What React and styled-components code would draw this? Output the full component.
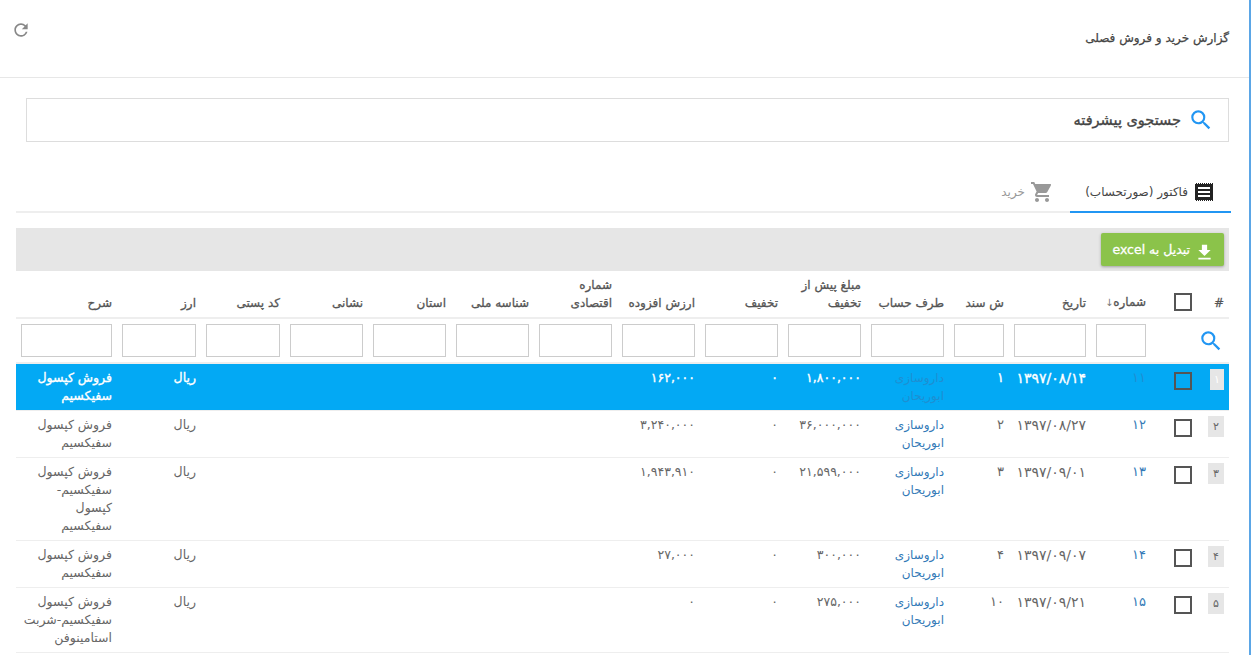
import React from 'react';
import styled, { createGlobalStyle } from 'styled-components';
import { MdSearch, MdShoppingCart, MdFileDownload, MdRefresh } from 'react-icons/md';

const GlobalStyle = createGlobalStyle`
  html, body {
    margin: 0;
    padding: 0;
    background: #fff;
  }
  body {
    font-family: "DejaVu Sans", "Noto Sans", sans-serif;
    font-size: 12px;
    color: #555;
  }
`;

const Page = styled.div`
  box-sizing: border-box;
  width: 1251px;
  height: 655px;
  overflow: hidden;
  border-right: 2px solid #5ba6e6;
  direction: rtl;
`;

const Header = styled.header`
  box-sizing: border-box;
  height: 78px;
  border-bottom: 1px solid #e7e7e7;
  padding: 0 20px 0 14px;
  display: flex;
  justify-content: space-between;
`;

const Title = styled.h1`
  margin: 29px 0 0;
  font-size: 12px;
  line-height: 18px;
  font-weight: 400;
  -webkit-text-stroke: 0.25px #444;
  color: #444;
`;

const RefreshIcon = styled(MdRefresh)`
  margin-top: 20px;
  font-size: 20px;
  color: #888;
  transform: translateX(-3px);
`;

const SearchBox = styled.div`
  box-sizing: border-box;
  height: 44px;
  margin: 20px 20px 0 26px;
  border: 1px solid #ddd;
  display: flex;
  align-items: center;
  gap: 7px;
  padding: 0 14px;
  font-size: 14.5px;
  font-weight: 400;
  -webkit-text-stroke: 0.35px #444;
  color: #444;
`;

const BlueSearch = styled(MdSearch)`
  display: block;
  font-size: 26px;
  color: #2196f3;
  flex: none;
`;

const Tabs = styled.nav`
  height: 36px;
  margin: 33px 18px 0 16px;
  border-bottom: 2px solid #eee;
  display: flex;
`;

const Tab = styled.div`
  box-sizing: border-box;
  height: 38px;
  width: ${p => p.$width}px;
  display: flex;
  align-items: center;
  gap: ${p => p.$gap}px;
  padding: 0 ${p => p.$pad}px 2px 0;
  font-size: 12px;
  color: ${p => (p.$active ? '#444' : '#999')};
  border-bottom: 2px solid ${p => (p.$active ? '#2196f3' : 'transparent')};
`;

const CartIcon = styled(MdShoppingCart)`
  font-size: 24px;
  color: #999;
  flex: none;
`;

const Toolbar = styled.div`
  box-sizing: border-box;
  height: 43px;
  margin: 15px 20px 0 16px;
  background: #e6e6e6;
  padding: 5px 5px 0 0;
  display: flex;
`;

const ExcelButton = styled.button`
  box-sizing: border-box;
  width: 123px;
  height: 33px;
  border: 0;
  border-radius: 2px;
  background: #8bc34a;
  box-shadow: 0 1px 3px rgba(0, 0, 0, 0.3);
  color: #fff;
  font-family: inherit;
  font-size: 12.5px;
  font-weight: 400;
  -webkit-text-stroke: 0.3px #fff;
  display: flex;
  align-items: center;
  gap: 4px;
  padding: 0 9px;
  direction: rtl;
  white-space: nowrap;
`;

const DownloadIcon = styled(MdFileDownload)`
  font-size: 21px;
  margin-top: 6px;
  flex: none;
`;

const Grid = styled.table`
  width: 1213px;
  margin: 0 20px 0 0;
  table-layout: fixed;
  border-collapse: separate;
  border-spacing: 0;
`;

const Th = styled.th`
  padding: 5px;
  height: 36px;
  text-align: right;
  vertical-align: bottom;
  font-size: 12px;
  line-height: 18px;
  font-weight: 400;
  -webkit-text-stroke: 0.3px #555;
  color: #555;
  border-bottom: 2px solid #eee;
`;

const SortArrow = styled.span`
  font-size: 10px;
  color: #777;
  -webkit-text-stroke: 0;
`;

const FilterCell = styled.td`
  padding: 5px;
  height: 33px;
  border-bottom: 2px solid #eee;
  text-align: right;
`;

const FilterInput = styled.input`
  display: block;
  box-sizing: border-box;
  width: 100%;
  height: 33px;
  border: 1px solid #ccc;
  background: #fff;
  padding: 0;
`;

const Row = styled.tr`
  background: ${p => (p.$selected ? '#03a9f4' : '#fff')};
`;

const Td = styled.td`
  padding: 5px;
  text-align: right;
  vertical-align: top;
  font-size: ${p => p.$size || 12.5}px;
  line-height: 18px;
  color: ${p => (p.$selected ? '#fff' : '#666')};
  -webkit-text-stroke: ${p => (p.$selected ? '0.35px #fff' : '0')};
  border-bottom: 1px solid #eee;
  white-space: pre-line;
`;

const RowLink = styled.a`
  font-size: ${p => p.$size || 12}px;
  color: #337ab7;
  opacity: ${p => (p.$selected ? 0.55 : 1)};
  text-decoration: none;
`;

const RowIndex = styled.span`
  display: inline-block;
  box-sizing: border-box;
  min-width: 14px;
  height: 21px;
  line-height: 21px;
  padding: 0 ${p => (p.$selected ? 2 : 5)}px;
  text-align: center;
  font-size: 11px;
  background: #e6e6e6;
  color: ${p => (p.$selected ? '#fff' : '#666')};
`;

const CheckBox = styled.span`
  display: block;
  box-sizing: border-box;
  width: 18px;
  height: 18px;
  margin: ${p => (p.$head ? '0 0 1px' : '3px 0 0')};
  border: 2px solid #555;
`;

const columns = [
  { width: 32 },
  { width: 46 },
  { width: 60, label: 'شماره', sorted: true },
  { width: 82, label: 'تاریخ' },
  { width: 60, label: 'ش سند' },
  { width: 83, label: 'طرف حساب' },
  { width: 83, label: 'مبلغ پیش از تخفیف' },
  { width: 83, label: 'تخفیف' },
  { width: 83, label: 'ارزش افزوده' },
  { width: 83, label: 'شماره اقتصادی' },
  { width: 83, label: 'شناسه ملی' },
  { width: 83, label: 'استان' },
  { width: 83, label: 'نشانی' },
  { width: 84, label: 'کد پستی' },
  { width: 84, label: 'ارز' },
  { width: 101, label: 'شرح' },
];

const rows = [
  { idx: '۱', num: '۱۱', date: '۱۳۹۷/۰۸/۱۴', doc: '۱', gross: '۱,۸۰۰,۰۰۰', off: '۰', vat: '۱۶۲,۰۰۰', note: 'فروش کپسول سفیکسیم', selected: true },
  { idx: '۲', num: '۱۲', date: '۱۳۹۷/۰۸/۲۷', doc: '۲', gross: '۳۶,۰۰۰,۰۰۰', off: '۰', vat: '۳,۲۴۰,۰۰۰', note: 'فروش کپسول سفیکسیم' },
  { idx: '۳', num: '۱۳', date: '۱۳۹۷/۰۹/۰۱', doc: '۳', gross: '۲۱,۵۹۹,۰۰۰', off: '۰', vat: '۱,۹۴۳,۹۱۰', note: 'فروش کپسول\nسفیکسیم-\nکپسول\nسفیکسیم' },
  { idx: '۴', num: '۱۴', date: '۱۳۹۷/۰۹/۰۷', doc: '۴', gross: '۳۰۰,۰۰۰', off: '۰', vat: '۲۷,۰۰۰', note: 'فروش کپسول سفیکسیم' },
  { idx: '۵', num: '۱۵', date: '۱۳۹۷/۰۹/۲۱', doc: '۱۰', gross: '۲۷۵,۰۰۰', off: '۰', vat: '۰', note: 'فروش کپسول سفیکسیم-شربت استامینوفن' },
];

const InvoiceIcon = () => (
  <svg width="18" height="18" viewBox="0 0 18 18" style={{ flex: 'none' }}>
    <path fill="#222" d="M0 0h18v18H0z" />
    <path fill="#fff" d="M3 4h12v2H3zM3 8h12v2H3zM3 12h12v2H3z" />
    <path stroke="#fff" strokeWidth="1" strokeDasharray="1 1" d="M0 .5h18M0 17.5h18" />
  </svg>
);

export default function App() {
  return (
    <Page>
      <GlobalStyle />
      <Header>
        <Title>گزارش خرید و فروش فصلی</Title>
        <RefreshIcon />
      </Header>
      <SearchBox>
        <BlueSearch />
        جستجوی پیشرفته
      </SearchBox>
      <Tabs>
        <Tab $active $width={161} $pad={18} $gap={7}>
          <InvoiceIcon />
          فاکتور (صورتحساب)
        </Tab>
        <Tab $width={100} $pad={16} $gap={5}>
          <CartIcon />
          خرید
        </Tab>
      </Tabs>
      <Toolbar>
        <ExcelButton>
          <DownloadIcon />
          تبدیل به excel
        </ExcelButton>
      </Toolbar>
      <Grid>
        <colgroup>
          {columns.map((c, i) => (
            <col key={i} width={c.width} />
          ))}
        </colgroup>
        <thead>
          <tr>
            <Th>#</Th>
            <Th><CheckBox $head /></Th>
            {columns.slice(2).map(c => (
              <Th key={c.label}>
                {c.label}
                {c.sorted && <SortArrow>↓</SortArrow>}
              </Th>
            ))}
          </tr>
          <tr>
            <FilterCell><BlueSearch /></FilterCell>
            <FilterCell />
            {columns.slice(2).map(c => (
              <FilterCell key={c.label}><FilterInput /></FilterCell>
            ))}
          </tr>
        </thead>
        <tbody>
          {rows.map(r => (
            <Row key={r.idx} $selected={r.selected}>
              <Td><RowIndex $selected={r.selected}>{r.idx}</RowIndex></Td>
              <Td><CheckBox /></Td>
              <Td><RowLink href="#" $size={13} $selected={r.selected}>{r.num}</RowLink></Td>
              <Td $selected={r.selected} $size={14}>{r.date}</Td>
              <Td $selected={r.selected} $size={13}>{r.doc}</Td>
              <Td><RowLink href="#" $selected={r.selected}>داروسازی ابوریحان</RowLink></Td>
              <Td $selected={r.selected}>{r.gross}</Td>
              <Td $selected={r.selected}>{r.off}</Td>
              <Td $selected={r.selected}>{r.vat}</Td>
              <Td /><Td /><Td /><Td /><Td />
              <Td $selected={r.selected}>ریال</Td>
              <Td $selected={r.selected}>{r.note}</Td>
            </Row>
          ))}
        </tbody>
      </Grid>
    </Page>
  );
}
